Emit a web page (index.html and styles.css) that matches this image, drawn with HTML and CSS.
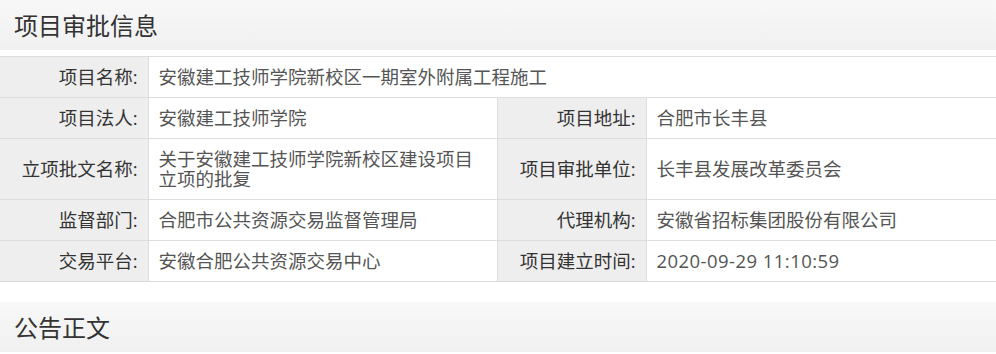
FILE: index.html
```html
<!DOCTYPE html>
<html lang="zh-CN">
<head>
<meta charset="utf-8">
<title>项目审批信息</title>
<link rel="stylesheet" href="styles.css">
</head>
<body>
<section class="panel">
  <h2 class="panel-title">项目审批信息</h2>
  <table class="info">
    <colgroup>
      <col class="c-label">
      <col class="c-value">
      <col class="c-label2">
      <col class="c-value2">
    </colgroup>
    <tr>
      <th>项目名称:</th>
      <td colspan="3">安徽建工技师学院新校区一期室外附属工程施工</td>
    </tr>
    <tr>
      <th>项目法人:</th>
      <td>安徽建工技师学院</td>
      <th>项目地址:</th>
      <td>合肥市长丰县</td>
    </tr>
    <tr>
      <th>立项批文名称:</th>
      <td>关于安徽建工技师学院新校区建设项目立项的批复</td>
      <th>项目审批单位:</th>
      <td>长丰县发展改革委员会</td>
    </tr>
    <tr>
      <th>监督部门:</th>
      <td>合肥市公共资源交易监督管理局</td>
      <th>代理机构:</th>
      <td>安徽省招标集团股份有限公司</td>
    </tr>
    <tr>
      <th>交易平台:</th>
      <td>安徽合肥公共资源交易中心</td>
      <th>项目建立时间:</th>
      <td class="num">2020-09-29 11:10:59</td>
    </tr>
  </table>
</section>
<section class="panel">
  <h2 class="panel-title">公告正文</h2>
</section>
</body>
</html>
```
FILE: styles.css
```css
html, body {
  margin: 0;
  padding: 0;
  background: #fff;
}
body {
  font-family: "Open Sans", "Noto Sans CJK SC", sans-serif;
  color: #333;
}
.panel {
  margin: 0 0 20px 0;
}
.panel-title {
  margin: 0;
  height: 50px;
  line-height: 50px;
  padding-left: 14px;
  font-size: 24px;
  font-weight: normal;
  color: #333;
  background: linear-gradient(#f8f8f8, #f0f0f0);
  font-family: "Noto Sans CJK SC", sans-serif;
}
.info {
  margin-top: 6px;
  width: 996px;
  table-layout: fixed;
  border-collapse: collapse;
  font-size: 18.5px;
  line-height: 20px;
}
.c-label { width: 148px; }
.c-value { width: 349px; }
.c-label2 { width: 149px; }
.c-value2 { width: 350px; }
.info th,
.info td {
  border: 1px solid #dddddd;
  padding: 10px;
  vertical-align: middle;
}
.info th {
  background: #eeeeee;
  font-weight: normal;
  text-align: right;
  color: #333;
}
.info td {
  text-align: left;
  color: #555;
  background: #fff;
}
.info td.num {
  letter-spacing: 0.45px;
}
.info tr > :first-child { border-left: none; }
.info tr > :last-child { border-right: none; }
```
